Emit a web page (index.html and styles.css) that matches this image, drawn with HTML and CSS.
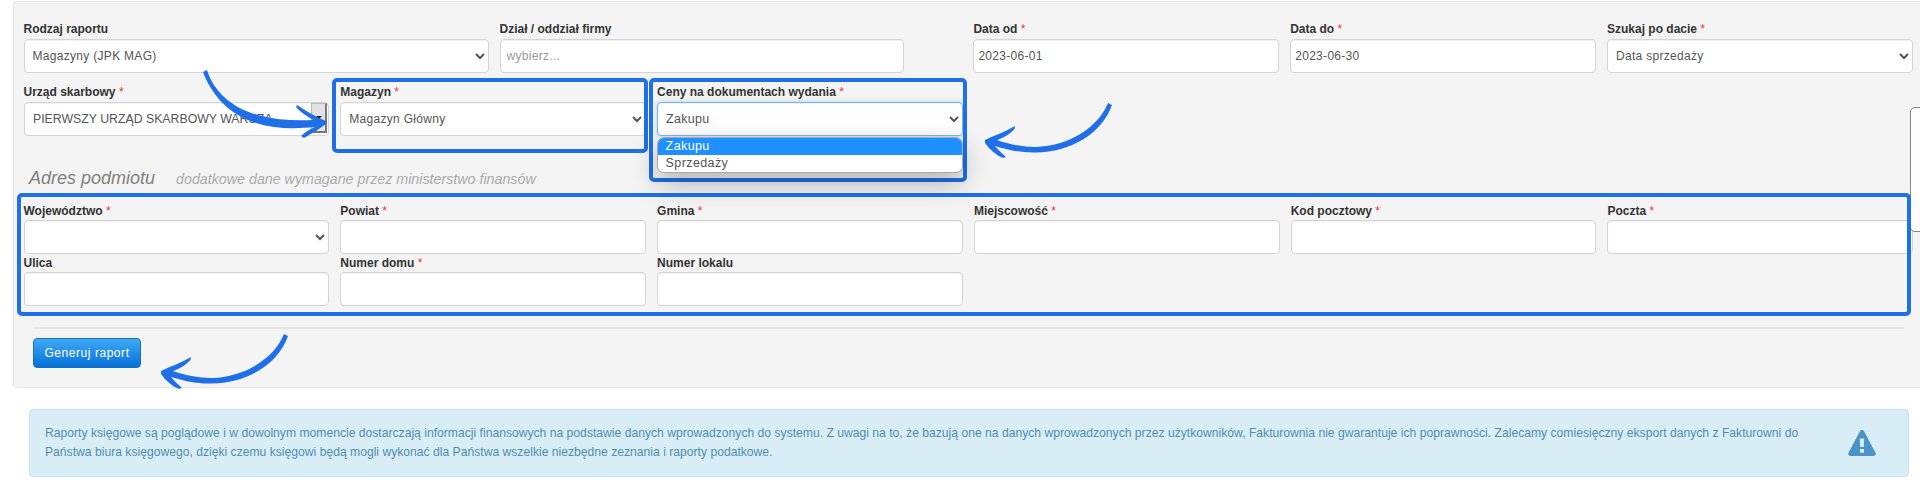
FILE: index.html
```
<!DOCTYPE html>
<html lang="pl">
<head>
<meta charset="utf-8">
<title>Raporty</title>
<link rel="stylesheet" href="styles.css">
</head>
<body>
<div class="page">
  <form class="panel">
    <div class="row row-top">
      <div class="field f-report"><label>Rodzaj raportu</label>
        <select class="ctl"><option>Magazyny (JPK MAG)</option></select></div>
      <div class="field f-dept"><label>Dział / oddział firmy</label>
        <input class="ctl ctl-plain ctl-pad" placeholder="wybierz..."></div>
      <div class="field f-col"><label>Data od <i>*</i></label>
        <input class="ctl ctl-plain" value="2023-06-01"></div>
      <div class="field f-col"><label>Data do <i>*</i></label>
        <input class="ctl ctl-plain" value="2023-06-30"></div>
      <div class="field f-col"><label>Szukaj po dacie <i>*</i></label>
        <select class="ctl"><option>Data sprzedaży</option></select></div>
    </div>
    <div class="grid grid-second">
      <div class="field"><label>Urząd skarbowy <i>*</i></label>
        <div class="ctl combo"><span class="combo-text">PIERWSZY URZĄD SKARBOWY WARSZA...</span><span class="combo-btn"><b></b></span></div></div>
      <div class="field"><label>Magazyn <i>*</i></label>
        <select class="ctl"><option>Magazyn Główny</option></select></div>
      <div class="field field-open"><label>Ceny na dokumentach wydania <i>*</i></label>
        <select class="ctl ctl-focus"><option>Zakupu</option><option>Sprzedaży</option></select>
        <ul class="dropdown"><li class="on">Zakupu</li><li>Sprzedaży</li></ul></div>
    </div>
    <h3 class="section"><span class="section-title">Adres podmiotu</span><small>dodatkowe dane wymagane przez ministerstwo finansów</small></h3>
    <div class="grid grid-address">
      <div class="field"><label>Województwo <i>*</i></label><select class="ctl"><option></option></select></div>
      <div class="field"><label>Powiat <i>*</i></label><input class="ctl ctl-plain"></div>
      <div class="field"><label>Gmina <i>*</i></label><input class="ctl ctl-plain"></div>
      <div class="field"><label>Miejscowość <i>*</i></label><input class="ctl ctl-plain"></div>
      <div class="field"><label>Kod pocztowy <i>*</i></label><input class="ctl ctl-plain"></div>
      <div class="field"><label>Poczta <i>*</i></label><input class="ctl ctl-plain"></div>
      <div class="field"><label>Ulica</label><input class="ctl ctl-plain"></div>
      <div class="field"><label>Numer domu <i>*</i></label><input class="ctl ctl-plain"></div>
      <div class="field"><label>Numer lokalu</label><input class="ctl ctl-plain"></div>
    </div>
    <hr class="rule">
    <button type="button" class="btn">Generuj raport</button>
  </form>
  <div class="alert">
    <p>Raporty księgowe są poglądowe i w dowolnym momencie dostarczają informacji finansowych na podstawie danych wprowadzonych do systemu. Z uwagi na to, że bazują one na danych wprowadzonych przez użytkowników, Fakturownia nie gwarantuje ich poprawności. Zalecamy comiesięczny eksport danych z Fakturowni do Państwa biura księgowego, dzięki czemu księgowi będą mogli wykonać dla Państwa wszelkie niezbędne zeznania i raporty podatkowe.</p>
    <svg class="alert-icon" viewBox="0 0 28 26" width="28" height="26"><path fill-rule="evenodd" fill="#4a93c6" d="M14 0c.9 0 1.6.5 2 1.2l11.500 21.500c.9 1.600-.2 3.300-2 3.300H2.500c-1.800 0-2.900-1.700-2-3.300L12 1.200C12.400.5 13.100 0 14 0zM11.800 8.500l.4 8.500h3.600l.4-8.500zM12 19v3.800h4V19z"/></svg>
  </div>

  <div class="edge-pop"></div>
  <div class="mark mark-store"></div>
  <div class="mark mark-price"></div>
  <div class="mark mark-address"></div>
  <svg class="arrows" viewBox="0 0 1920 493" width="1920" height="493" fill="#1f70e8">
    <path d="M203 72L207 70C214 92 232 108 258 115C276 120 296 121 313 120C307 116 300 112 296 107L297 105C306 111 316 117 326 121L326 124C319 129 311 134 304 138L301 136C305 132 310 129 315 127C296 129 274 129 256 123C230 115 212 96 203 72Z"/>
    <path d="M985 140C995 135 1005 132 1015 126L1014.500 129C1010 134 1003 138 997 140C1008 144 1022 147 1036 147C1068 146 1098 128 1108 103L1112 105C1102 134 1070 152 1036 152.500C1022 153 1008 150 995 146C998 150 1002 153 1006 157L1003 158C996 155 990 150 985 143Z"/>
    <path transform="translate(-824 231)" d="M985 140C995 135 1005 132 1015 126L1014.500 129C1010 134 1003 138 997 140C1008 144 1022 147 1036 147C1068 146 1098 128 1108 103L1112 105C1102 134 1070 152 1036 152.500C1022 153 1008 150 995 146C998 150 1002 153 1006 157L1003 158C996 155 990 150 985 143Z"/>
  </svg>
</div>
</body>
</html>
```
FILE: styles.css
```
* { box-sizing: border-box; }
html, body { margin: 0; padding: 0; background: #fff; }
body { font: 12px/16px "Liberation Sans", Arial, sans-serif; color: #333; }
.page { position: relative; width: 1920px; height: 493px; overflow: hidden; padding-top: 1px; }

.panel {
  margin-left: 13px;
  height: 387px;
  padding: 19px 0 0 9.500px;
  background: #f4f4f4;
  border: 1px solid #e6e6e6;
  border-right: 0;
  border-radius: 4px 0 0 4px;
}
.row { display: flex; }
.field { position: relative; flex: none; }
.f-report { width: 465px; margin-right: 11px; }
.f-dept { width: 404.500px; margin-right: 69.400px; }
.f-col { width: 305.800px; margin-right: 11px; }

.grid { display: grid; grid-template-columns: repeat(6, 305.800px); column-gap: 11px; }
.grid-second { margin-top: 11px; }
.grid-address { margin-top: 13px; row-gap: 1px; }
.grid-address label { margin-bottom: 1px; }

label { display: block; margin-bottom: 2px; font-weight: bold; color: #333; line-height: 16px; }
label i { font-style: normal; font-weight: normal; color: #e33; }

.ctl {
  display: block;
  width: 100%;
  height: 34px;
  margin: 0;
  padding: 0 4px;
  font: 12px "Liberation Sans", Arial, sans-serif;
  letter-spacing: .3px;
  color: #555;
  background: #fff;
  border: 1px solid #d4d4d4;
  border-radius: 4px;
  box-shadow: inset 0 1px 1px rgba(0,0,0,.06);
  outline: 0;
}
.ctl-pad { padding: 0 6px; }
.ctl::placeholder { color: #999; opacity: 1; }
.ctl-focus { font-size: 12.500px; border-color: #7db4e6; box-shadow: inset 0 1px 1px rgba(0,0,0,.06), 0 0 4px rgba(82,168,236,.45); }

.combo { display: flex; align-items: stretch; padding: 0 0 2px 8.500px; }
.combo-text { flex: 1; line-height: 32px; white-space: nowrap; overflow: hidden; letter-spacing: 0; font-size: 12.300px; }
.combo-btn {
  display: flex; align-items: center; justify-content: center;
  width: 16px; margin-right: 1px;
  background: #e2e2e2;
  border: 1px solid #bbb; border-right: 2px solid #777; border-bottom: 2px solid #777;
}
.combo-btn b { display: block; border: 3px solid transparent; border-top: 3px solid #111; border-bottom: 0; }

.dropdown {
  position: absolute; left: 0; top: 53px; right: 0;
  margin: 0; padding: 0; list-style: none;
  font-size: 12.500px; letter-spacing: .4px; line-height: 17px; color: #555;
  background: #fff;
  border: 1px solid #aaa; border-radius: 7px; overflow: hidden;
  box-shadow: 0 10px 28px rgba(0,0,0,.28);
  z-index: 2;
}
.dropdown li { padding-left: 7.500px; height: 17px; }
.dropdown .on { background: #1e90ff; color: #fff; }

.section { margin: 30px 0 0 5.500px; height: 24px; font-weight: normal; font-style: italic; line-height: 24px; color: #808080; display: flex; align-items: baseline; }
.section-title { font-size: 18px; }
.section small { margin-left: 21px; font-size: 14.250px; color: #aaa; }

.rule { height: 2px; margin: 21px 16px 0 9.500px; border: 0; background: #e6e6e6; }
.btn {
  display: block;
  width: 108px; height: 30px; margin: 9px 0 0 9.500px; padding: 0;
  font: 12px "Liberation Sans", Arial, sans-serif; letter-spacing: .55px;
  color: #fff;
  background: linear-gradient(#3fa9f5, #0671d9);
  border: 1px solid #1b6fb8;
  border-radius: 4px;
}

.alert {
  display: flex; align-items: center; justify-content: space-between;
  width: 1880px; height: 68px; margin: 21px 0 0 28.500px; padding: 0 32px 0 15.500px;
  color: #4f8db0;
  background: #d9edf7;
  border: 1px solid #bce8f1;
  border-radius: 4px;
}
.alert p { width: 1770px; margin: 0; line-height: 18.700px; font-size: 12.150px; }

.edge-pop { position: absolute; left: 1910px; top: 107px; width: 20px; height: 125px; background: #fdfdfd; border: 1px solid #888; border-radius: 5px 0 0 5px; }
.mark { position: absolute; border: 4px solid #1f70e8; border-radius: 5px; }
.mark-store { left: 332px; top: 78px; width: 316px; height: 75px; }
.mark-price { left: 649px; top: 78px; width: 318px; height: 104px; }
.mark-address { left: 17px; top: 193px; width: 1894px; height: 123px; }
.arrows { position: absolute; left: 0; top: 0; pointer-events: none; }
```
